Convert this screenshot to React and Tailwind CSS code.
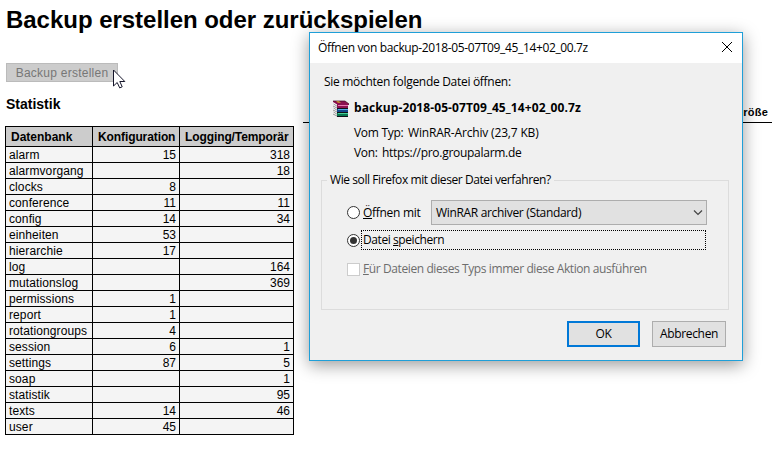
import React from "react";

const rows = [
  ["alarm", "15", "318"],
  ["alarmvorgang", "", "18"],
  ["clocks", "8", ""],
  ["conference", "11", "11"],
  ["config", "14", "34"],
  ["einheiten", "53", ""],
  ["hierarchie", "17", ""],
  ["log", "", "164"],
  ["mutationslog", "", "369"],
  ["permissions", "1", ""],
  ["report", "1", ""],
  ["rotationgroups", "4", ""],
  ["session", "6", "1"],
  ["settings", "87", "5"],
  ["soap", "", "1"],
  ["statistik", "", "95"],
  ["texts", "14", "46"],
  ["user", "45", ""],
];

function StatsTable() {
  return (
    <table className="w-[289px] table-fixed border-collapse bg-[#f4f4f4] text-[12px] leading-[14px]">
      <colgroup>
        <col className="w-[87px]" />
        <col className="w-[87px]" />
        <col className="w-[114px]" />
      </colgroup>
      <thead>
        <tr className="h-5 bg-[#cccccc]">
          <th className="border border-black p-0 pl-[5px] text-left">Datenbank</th>
          <th className="border border-black p-0 pl-[5px] text-left tracking-[-0.1px]">Konfiguration</th>
          <th className="whitespace-nowrap border border-black p-0 pl-[5px] text-left tracking-[-0.1px]">Logging/Temporär</th>
        </tr>
      </thead>
      <tbody>
        {rows.map(([name, config, temp]) => (
          <tr key={name} className="h-4">
            <td className="border border-black p-0 pl-[3px] pt-px tracking-[0.1px]">{name}</td>
            <td className="border border-black p-0 pr-[3px] pt-px text-right">{config}</td>
            <td className="border border-black p-0 pr-[3px] pt-px text-right">{temp}</td>
          </tr>
        ))}
      </tbody>
    </table>
  );
}

function Book({ y, cover, light }) {
  return (
    <g transform={`translate(0 ${y})`}>
      <path d="M1 0l5 3v3.5L1 4z" fill="#f8f8f8" />
      <path d="M1 4l5 2.5M1.5 2L5 4.2" fill="none" stroke="#555" strokeWidth="0.6" />
      <path d="M5 2h11v4H5z" fill={cover} />
      <path d="M6 3h10v1H6z" fill={light} />
      <path d="M5 6h11v1H5z" fill="#101018" />
    </g>
  );
}

function ArchiveIcon() {
  return (
    <svg width="17" height="17" viewBox="0 0 17 17" className="shrink-0">
      <Book y={10} cover="#087850" light="#45d098" />
      <Book y={6} cover="#12488c" light="#58a8e8" />
      <Book y={2} cover="#8c1050" light="#e878b0" />
      <path d="M1 1h12l4 3v1H6L1 2z" fill="#8c1050" />
      <path d="M1 1h12l4 3" fill="none" stroke="#3a0820" strokeWidth="0.7" />
      <path d="M4 1.3h3l2 1.4H6z" fill="#d0a828" />
    </svg>
  );
}

function Radio({ checked }) {
  return (
    <span className="flex h-[13px] w-[13px] shrink-0 items-center justify-center rounded-full border border-[#333333] bg-white">
      {checked && <span className="h-[7px] w-[7px] rounded-full bg-[#333333]" />}
    </span>
  );
}

function DownloadDialog() {
  return (
    <div className="absolute left-[309px] top-8 flex h-[329px] w-[434px] flex-col border border-[#1f9fd8] bg-[#f0f0f0] font-['Open_Sans','Noto_Sans',sans-serif] text-[12px] leading-4 whitespace-nowrap shadow-[0_4px_16px_rgba(0,0,0,0.4)]">
      <div className="flex h-[30px] shrink-0 items-center justify-between bg-white pl-2 pr-[10px]">
        <span className="tracking-[-0.36px]">Öffnen von backup-2018-05-07T09_45_14+02_00.7z</span>
        <svg width="10" height="10" viewBox="0 0 10 10" stroke="#000" strokeWidth="1" className="mb-0.5">
          <path d="M0 0l10 10M10 0L0 10" />
        </svg>
      </div>
      <div className="pl-[14px] pt-[11px] tracking-[-0.3px]">Sie möchten folgende Datei öffnen:</div>
      <div className="mt-[9px] flex h-[18px] items-center pl-[22px]">
        <ArchiveIcon />
        <span className="ml-[5px] font-bold tracking-[0.09px]">backup-2018-05-07T09_45_14+02_00.7z</span>
      </div>
      <div className="mt-2 flex pl-11">
        <span className="w-[54px] tracking-[-0.3px]">Vom Typ:</span>
        <span className="tracking-[-0.17px]">WinRAR-Archiv (23,7 KB)</span>
      </div>
      <div className="mt-1 flex pl-11">
        <span className="w-7 tracking-[-0.3px]">Von:</span>
        <span className="tracking-[-0.28px]">https://pro.groupalarm.de</span>
      </div>
      <fieldset className="ml-[11px] mt-[11px] h-[138px] w-[408px] shrink-0 border border-[#dcdcdc] pl-[25px]">
        <legend className="-ml-5 px-[3px] tracking-[-0.42px]">Wie soll Firefox mit dieser Datei verfahren?</legend>
        <div className="mt-3 flex h-[25px] items-center">
          <Radio />
          <span className="ml-[3px] w-[68px] tracking-[-0.3px]"><u>Ö</u>ffnen mit</span>
          <div className="flex h-[25px] w-[276px] items-center justify-between border border-[#adadad] bg-[#e1e1e1] pl-1 pr-[3px]">
            <span className="tracking-[-0.33px]">WinRAR archiver (Standard)</span>
            <svg width="10" height="6" viewBox="0 0 10 6" fill="none" stroke="#444" strokeWidth="1.2">
              <path d="M1 0.5l4 4 4-4" />
            </svg>
          </div>
        </div>
        <div className="mt-[5px] flex h-5 items-center">
          <Radio checked />
          <span className="ml-px flex h-5 w-[345px] items-center border border-dotted border-black pl-px tracking-[-0.42px]">
            Datei&nbsp;<u>s</u>peichern
          </span>
        </div>
        <div className="mt-[11px] flex h-4 items-center text-[#6d6d6d]">
          <span className="h-[13px] w-[13px] border border-[#cccccc] bg-white" />
          <span className="ml-[3px] tracking-[-0.4px]"><u>F</u>ür Dateien dieses Typs immer diese Aktion ausführen</span>
        </div>
      </fieldset>
      <div className="mt-[11px] flex justify-end gap-3 pr-4">
        <button className="h-[26px] w-[73px] border-2 border-[#0078d7] bg-[#e1e1e1] tracking-[-0.3px]">OK</button>
        <button className="h-[26px] w-[74px] border border-[#adadad] bg-[#e1e1e1] tracking-[-0.33px]">Abbrechen</button>
      </div>
    </div>
  );
}

function Cursor() {
  return (
    <svg width="13" height="20" viewBox="0 0 13 20" className="absolute left-[113px] top-[69px]">
      <path d="M.5 1v16l3.7-3.5 2.5 5.4 2.5-1.1-2.4-5.3h5z" fill="#fff" stroke="#15152a" strokeWidth="1" />
    </svg>
  );
}

export default function App() {
  return (
    <div className="relative h-[456px] w-[772px] overflow-hidden bg-white font-['Liberation_Sans',Arial,sans-serif] text-black">
      <h1 className="pl-[6px] pt-[6px] text-[24px] font-bold leading-[28px] tracking-[-0.03px]">Backup erstellen oder zurückspielen</h1>
      <div className="flex items-start justify-between">
        <div className="pl-[5px] pt-[29px]">
          <button className="ml-px block h-[19px] w-[112px] border border-[#bbbbbb] bg-[#cccccc] pt-px text-[12px] leading-4 tracking-[0.25px] text-[#777777]">
            Backup erstellen
          </button>
          <h2 className="ml-px mt-[14px] text-[14px] font-bold leading-4">Statistik</h2>
          <div className="mt-[14px]">
            <StatsTable />
          </div>
        </div>
        <div className="mt-[71px] h-[18px] w-[469px] border-b border-black pr-1 text-right text-[11px] font-bold leading-[14px] tracking-[0.2px]">
          Größe
        </div>
      </div>
      <Cursor />
      <DownloadDialog />
    </div>
  );
}
